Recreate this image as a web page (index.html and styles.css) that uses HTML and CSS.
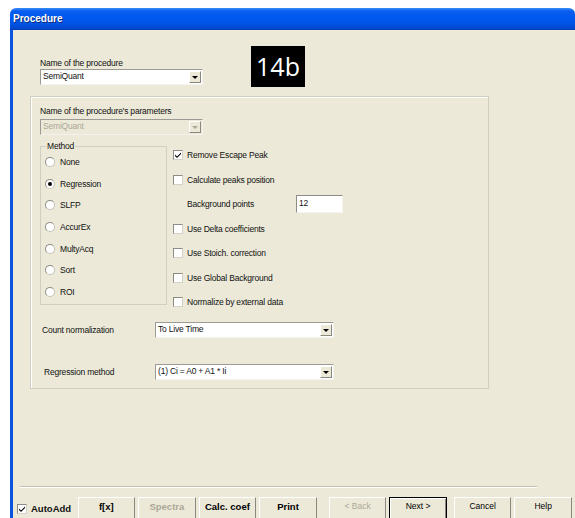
FILE: index.html
```html
<!DOCTYPE html>
<html>
<head>
<meta charset="utf-8">
<title>Procedure</title>
<link rel="stylesheet" href="styles.css">
</head>
<body>
<div class="window">
  <div class="titlebar">Procedure</div>
  <div class="client">
    <div class="head">
      <div class="field">
        <div class="lbl">Name of the procedure</div>
        <div class="combo w163"><span class="val">SemiQuant</span><span class="arrow"></span></div>
      </div>
      <div class="badge">14b</div>
    </div>

    <div class="group params">
      <div class="lbl">Name of the procedure's parameters</div>
      <div class="combo w163 disabled"><span class="val">SemiQuant</span><span class="arrow"></span></div>

      <div class="options">
        <fieldset class="method">
          <legend>Method</legend>
          <label class="radio-row"><span class="radio"></span>None</label>
          <label class="radio-row"><span class="radio on"></span>Regression</label>
          <label class="radio-row"><span class="radio"></span>SLFP</label>
          <label class="radio-row"><span class="radio"></span>AccurEx</label>
          <label class="radio-row"><span class="radio"></span>MultyAcq</label>
          <label class="radio-row"><span class="radio"></span>Sort</label>
          <label class="radio-row"><span class="radio"></span>ROI</label>
        </fieldset>
        <div class="checks">
          <label class="check-row"><span class="check on"><svg viewBox="0 0 8 8"><path d="M1 3.5 L3 5.5 L7 1.5 L7 3 L3 7 L1 5 Z"/></svg></span>Remove Escape Peak</label>
          <label class="check-row"><span class="check"></span>Calculate peaks position</label>
          <div class="check-row sub"><span class="sub-lbl">Background points</span><span class="edit">12</span></div>
          <label class="check-row"><span class="check"></span>Use Delta coefficients</label>
          <label class="check-row"><span class="check"></span>Use Stoich. correction</label>
          <label class="check-row"><span class="check"></span>Use Global Background</label>
          <label class="check-row"><span class="check"></span>Normalize by external data</label>
        </div>
      </div>

      <div class="form-row count">
        <span class="row-lbl">Count normalization</span>
        <div class="combo w178"><span class="val">To Live Time</span><span class="arrow"></span></div>
      </div>
      <div class="form-row regr">
        <span class="row-lbl">Regression method</span>
        <div class="combo w178"><span class="val">(1) Ci = A0 + A1 * Ii</span><span class="arrow"></span></div>
      </div>
    </div>

    <div class="spacer"></div>
    <div class="sep"></div>

    <div class="footer">
      <label class="auto"><span class="check on"><svg viewBox="0 0 8 8"><path d="M1 3.5 L3 5.5 L7 1.5 L7 3 L3 7 L1 5 Z"/></svg></span>AutoAdd</label>
      <button class="btn b-fx">f[x]</button>
      <button class="btn b-spectra" disabled>Spectra</button>
      <button class="btn b-calc">Calc. coef</button>
      <button class="btn b-print">Print</button>
      <button class="btn thin b-back" disabled>&lt; Back</button>
      <button class="btn thin default b-next">Next &gt;</button>
      <button class="btn thin b-cancel">Cancel</button>
      <button class="btn thin b-help">Help</button>
    </div>
  </div>
</div>
</body>
</html>
```

FILE: styles.css
```css
html, body {
  margin: 0;
  padding: 0;
  background: #fff;
  height: 100%;
  overflow: hidden;
}

body {
  font-family: "Liberation Sans", Arial, sans-serif;
  font-size: 8.5px;
  letter-spacing: -0.2px;
  color: #111;
}

.window {
  margin: 8px 0 0 10px;
  height: 510px;
  display: flex;
  flex-direction: column;
}

.titlebar {
  height: 22px;
  box-sizing: border-box;
  padding: 4px 0 0 3px;
  border-radius: 6px 6px 0 0;
  background: linear-gradient(#3b8df8 0, #0a5ef0 3px, #0058ee 10px, #0055e6 70%, #0046cc 95%, #003aa8 100%);
  color: #fff;
  font-weight: bold;
  font-size: 10px;
  letter-spacing: 0;
  line-height: 14px;
  text-shadow: 1px 1px 0 #0a2a7a;
}

.client {
  flex: 1;
  display: flex;
  flex-direction: column;
  background: #ece9d8;
  border-left: 3px solid #0a55e0;
  overflow: hidden;
}

/* top: procedure name and the tag */
.head {
  display: flex;
  align-items: flex-start;
  padding-top: 16px;
}

.field {
  margin: 11px 0 0 27px;
}

.lbl {
  line-height: 12px;
  height: 12px;
}

.badge {
  margin-left: 48px;
  width: 54px;
  height: 41px;
  background: #000;
  color: #fff;
  font-family: "Open Sans", sans-serif;
  font-size: 25px;
  letter-spacing: 0;
  line-height: 41px;
  text-align: center;
}

/* combo boxes */
.combo {
  box-sizing: border-box;
  height: 16px;
  display: flex;
  background: #fff;
  border-top: 1px solid #9c9a94;
  border-left: 1px solid #9c9a94;
  border-right: 1px solid #f4f3ee;
  border-bottom: 1px solid #f4f3ee;
}

.w163 { width: 163px; }
.w178 { width: 179px; }

.combo .val {
  flex: 1;
  padding-left: 2px;
  line-height: 12px;
  white-space: nowrap;
  overflow: hidden;
}

.combo .arrow {
  width: 12px;
  margin: 1px 1px 1px 0;
  box-sizing: border-box;
  background: #ece9d8;
  border-top: 1px solid #fff;
  border-left: 1px solid #fff;
  border-right: 1px solid #8a887e;
  border-bottom: 1px solid #8a887e;
  display: flex;
  align-items: center;
  justify-content: center;
}

.combo .arrow::after {
  content: "";
  border-left: 3px solid transparent;
  border-right: 3px solid transparent;
  border-top: 3px solid #000;
  margin-top: 1px;
}

.combo.disabled {
  background: #ece9d8;
  color: #aca899;
}

.combo.disabled .arrow::after {
  border-top-color: #aca899;
}

/* parameters group */
.group {
  border: 1px solid #d0cebf;
  box-shadow: 1px 1px 0 #fff inset;
}

.params {
  margin: 9px 0 0 17px;
  width: 459px;
  height: 293px;
  box-sizing: border-box;
  padding: 8px 0 0 9px;
}

.params > .combo {
  margin-top: 2px;
}

.options {
  display: flex;
  align-items: flex-start;
  margin-top: 6px;
  height: 180px;
}

.method {
  margin: 0;
  padding: 0 0 1px 4px;
  width: 127px;
  height: 164px;
  box-sizing: border-box;
  border: 1px solid #d0cebf;
  min-width: 0;
}

.method legend {
  padding: 0 1px;
  margin-left: 1px;
  line-height: 10px;
}

.radio-row {
  display: flex;
  align-items: center;
  height: 21.7px;
}

.radio {
  width: 10px;
  height: 10px;
  box-sizing: border-box;
  border-radius: 50%;
  background: #fff;
  border: 1px solid #c4c2b8;
  border-top-color: #8e8c84;
  border-left-color: #8e8c84;
  margin-right: 5px;
  display: flex;
  align-items: center;
  justify-content: center;
}

.radio.on::after {
  content: "";
  width: 4px;
  height: 4px;
  border-radius: 50%;
  background: #000;
}

.checks {
  margin-left: 6px;
  padding-top: 2px;
}

.check-row {
  display: flex;
  align-items: center;
  height: 24.5px;
}

.check {
  width: 10px;
  height: 10px;
  box-sizing: border-box;
  background: #fff;
  border: 1px solid #d4d2c8;
  border-top-color: #8e8c84;
  border-left-color: #8e8c84;
  margin-right: 4px;
  display: flex;
  align-items: center;
  justify-content: center;
}

.check svg {
  width: 8px;
  height: 8px;
  fill: #000;
}

.sub-lbl {
  width: 109px;
  padding-left: 14px;
}

.edit {
  box-sizing: border-box;
  width: 47px;
  height: 18px;
  background: #fff;
  border-top: 1px solid #8e8c84;
  border-left: 1px solid #8e8c84;
  border-right: 1px solid #f4f3ee;
  border-bottom: 1px solid #f4f3ee;
  padding: 1px 0 0 2px;
  line-height: 12px;
}

.form-row {
  display: flex;
  align-items: center;
}

.row-lbl {
  width: 113px;
}

.count {
  margin: 1px 0 0 2px;
}

.regr {
  margin: 26px 0 0 4px;
}

.regr .row-lbl {
  width: 111px;
}

.spacer {
  flex: 1;
}

/* separator above the button bar */
.sep {
  margin-left: 7px;
  width: 517px;
  height: 1px;
  background: #c2bfae;
  border-bottom: 1px solid #fff;
  flex: none;
}

.footer {
  display: flex;
  align-items: flex-start;
  height: 21px;
  padding-top: 9px;
  flex: none;
}

.auto {
  display: flex;
  align-items: center;
  font-weight: bold;
  font-size: 9.5px;
  letter-spacing: 0;
  margin: 6px 0 0 4px;
  width: 61px;
}

.btn {
  font-family: "Liberation Sans", Arial, sans-serif;
  font-size: 9.5px;
  letter-spacing: 0;
  font-weight: bold;
  color: #000;
  background: #ece9d8;
  height: 24px;
  width: 58px;
  box-sizing: border-box;
  padding: 0 0 6px 0;
  margin-right: 3px;
  border-top: 1px solid #fff;
  border-left: 1px solid #fff;
  border-right: 1px solid #8a887e;
  border-bottom: 1px solid #8a887e;
  border-radius: 0;
}

.btn:disabled {
  color: #aca899;
}

.btn.thin {
  font-weight: normal;
  font-size: 8.5px;
}

.b-back { margin-left: 9px; }
.b-next { margin-right: 7px; }

.btn.default {
  border: 1px solid #000;
  box-shadow: inset 1px 1px 0 #fff, inset -1px -1px 0 #8a887e;
}
```
